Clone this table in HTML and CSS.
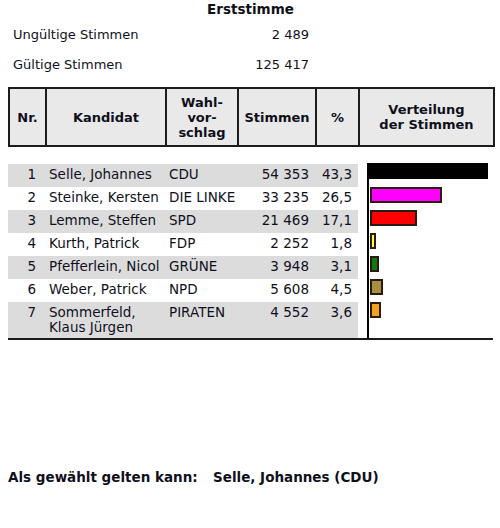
FILE: index.html
```html
<!DOCTYPE html>
<html lang="de">
<head>
    <meta charset="UTF-8">
    <meta name="viewport" content="width=device-width, initial-scale=1.0">
    <title>Erststimme</title>
    <link rel="stylesheet" href="styles.css">
</head>
<body>
    <div class="page">
        <h1 class="title">Erststimme</h1>

        <table class="summary">
            <tr>
                <td class="label">Ungültige Stimmen</td>
                <td class="num">2 489</td>
            </tr>
            <tr>
                <td class="label">Gültige Stimmen</td>
                <td class="num">125 417</td>
            </tr>
        </table>

        <table class="grid head">
            <colgroup>
                <col class="c-nr"><col class="c-name"><col class="c-party"><col class="c-votes"><col class="c-pct"><col class="c-chart">
            </colgroup>
            <tr>
                <th>Nr.</th>
                <th>Kandidat</th>
                <th>Wahl-<br>vor-<br>schlag</th>
                <th>Stimmen</th>
                <th>%</th>
                <th>Verteilung<br>der Stimmen</th>
            </tr>
        </table>

        <table class="grid results">
            <colgroup>
                <col class="c-nr"><col class="c-name"><col class="c-party"><col class="c-votes"><col class="c-pct"><col class="c-chart">
            </colgroup>
            <tr class="odd">
                <td class="nr">1</td><td>Selle, Johannes</td><td>CDU</td><td class="num">54 353</td><td class="num">43,3</td>
                <td class="chart"><div class="bar first" style="width: 121px; background: #000;"></div></td>
            </tr>
            <tr>
                <td class="nr">2</td><td>Steinke, Kersten</td><td>DIE LINKE</td><td class="num">33 235</td><td class="num">26,5</td>
                <td class="chart"><div class="bar" style="width: 72px; background: #ff00ff;"></div></td>
            </tr>
            <tr class="odd">
                <td class="nr">3</td><td>Lemme, Steffen</td><td>SPD</td><td class="num">21 469</td><td class="num">17,1</td>
                <td class="chart"><div class="bar" style="width: 47px; background: #ff0000;"></div></td>
            </tr>
            <tr>
                <td class="nr">4</td><td>Kurth, Patrick</td><td>FDP</td><td class="num">2 252</td><td class="num">1,8</td>
                <td class="chart"><div class="bar" style="width: 6px; background: #ffff33;"></div></td>
            </tr>
            <tr class="odd">
                <td class="nr">5</td><td>Pfefferlein, Nicol</td><td>GRÜNE</td><td class="num">3 948</td><td class="num">3,1</td>
                <td class="chart"><div class="bar" style="width: 9px; background: #127812;"></div></td>
            </tr>
            <tr>
                <td class="nr">6</td><td>Weber, Patrick</td><td>NPD</td><td class="num">5 608</td><td class="num">4,5</td>
                <td class="chart"><div class="bar" style="width: 13px; background: #a8903c;"></div></td>
            </tr>
            <tr class="odd last">
                <td class="nr">7</td><td>Sommerfeld,<br>Klaus Jürgen</td><td>PIRATEN</td><td class="num">4 552</td><td class="num">3,6</td>
                <td class="chart"><div class="bar" style="width: 11px; background: #f4a21e;"></div></td>
            </tr>
        </table>

        <p class="elected">
            <span class="elected-label">Als gewählt gelten kann:</span><span>Selle, Johannes (CDU)</span>
        </p>
    </div>
</body>
</html>
```

FILE: styles.css
```css
body {
    font-family: 'DejaVu Sans', Verdana, sans-serif;
    font-size: 13px;
    line-height: 15px;
    color: #10101c;
    background-color: #ffffff;
    margin: 0;
    padding: 0;
}
.page {
    width: 485px;
    padding: 0 8px;
}
.title {
    font-size: 13.5px;
    line-height: 15px;
    font-weight: bold;
    text-align: center;
    margin: 2px 0 0 0;
}
.summary {
    width: 301px;
    border-collapse: collapse;
    margin-top: 2px;
}
.summary td {
    padding: 8px 0 7px 0;
}
.summary .label {
    padding-left: 5px;
}
.summary .num {
    text-align: right;
}
.grid {
    width: 485px;
    table-layout: fixed;
    border-collapse: collapse;
}
.c-nr { width: 37px; }
.c-name { width: 120px; }
.c-party { width: 72px; }
.c-votes { width: 78px; }
.c-pct { width: 43px; }
.c-chart { width: 135px; }
.head {
    margin-top: 8px;
}
.head th {
    background-color: #e9e9e9;
    border: 2px solid #1c1c1c;
    height: 56px;
    padding: 0;
    font-size: 13px;
    font-weight: bold;
    text-align: center;
    vertical-align: middle;
}
.results {
    margin-top: 17px;
    border-bottom: 2px solid #1c1c1c;
}
.results td {
    padding: 3px 6px 5px 4px;
    font-size: 13.5px;
    vertical-align: top;
    white-space: nowrap;
}
.results tr.odd td {
    background-color: #dcdcdc;
}
.results tr.last td {
    padding-bottom: 3px;
}
.results td.nr {
    text-align: right;
    padding-right: 9px;
}
.results td.num {
    text-align: right;
}
.results td.chart,
.results tr.odd td.chart {
    padding: 0;
    background: linear-gradient(#000000, #000000) 9px 0 / 2px 100% no-repeat, #ffffff;
}
.bar {
    box-sizing: border-box;
    height: 16px;
    margin-left: 12px;
    border: 2px solid #2a1a10;
}
.bar.first {
    margin-left: 9px;
    margin-top: -1px;
    border-color: #000000;
}
.elected {
    font-size: 13.5px;
    font-weight: bold;
    margin: 130px 0 0 0;
}
.elected-label {
    display: inline-block;
    width: 205px;
}
```
